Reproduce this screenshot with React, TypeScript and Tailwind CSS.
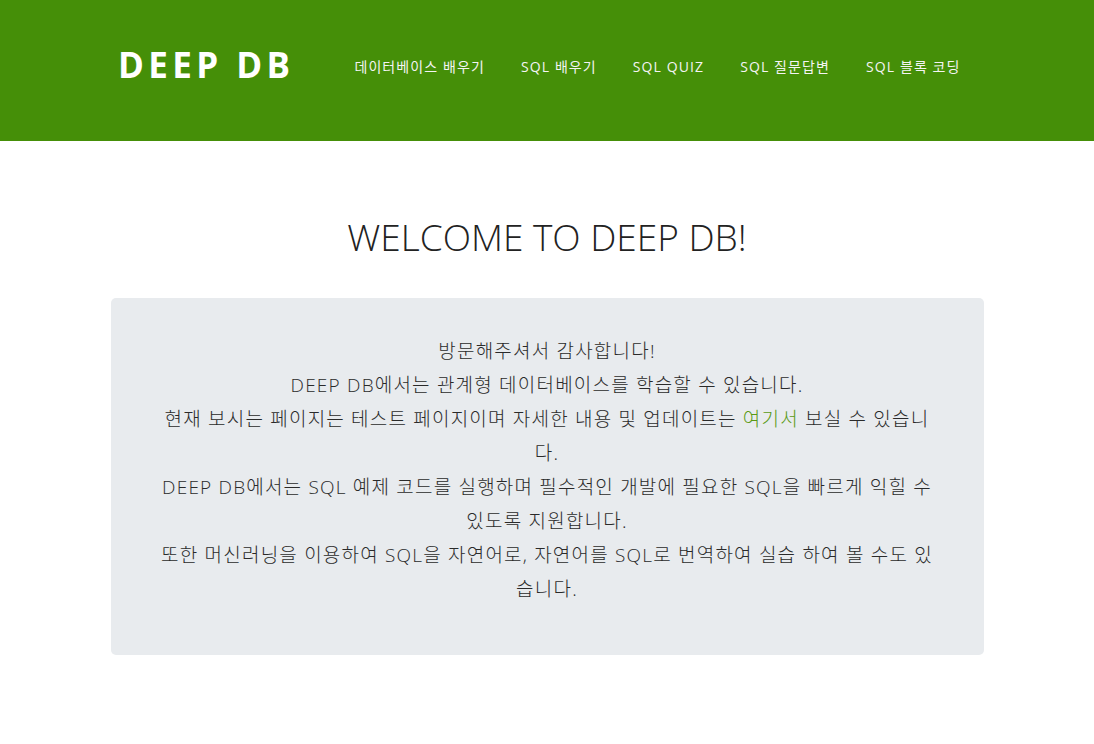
const navItems = ['데이터베이스 배우기', 'SQL 배우기', 'SQL QUIZ', 'SQL 질문답변', 'SQL 블록 코딩']

const kr = "font-['Open_Sans','Noto_Sans_CJK_KR',sans-serif]"

export default function App() {
  return (
    <div className={`min-h-screen bg-white ${kr}`}>
      <header className="h-[141px] bg-[#458f08] flex items-center">
        <div className="flex items-center pl-[118px]">
          <a href="#" className="text-white text-[35px] font-bold tracking-[4.4px] leading-none -mt-[12px]">
            DEEP DB
          </a>
          <nav className="flex items-center gap-[36px] ml-[60px] -mt-[8px]">
            {navItems.map((item) => (
              <a key={item} href="#" className="text-[14px] text-[#f4f4f4] tracking-[1.1px] leading-none">
                {item}
              </a>
            ))}
          </nav>
        </div>
      </header>

      <main className="flex flex-col items-center">
        <h1 className="mt-[77px] text-[37px] font-light text-[#222] leading-none">WELCOME TO DEEP DB!</h1>

        <section className="mt-[43px] w-[873px] h-[357px] bg-[#e8ebee] rounded-[5px] flex justify-center pt-[36px]">
          <div className="w-[772px] text-center text-[19px] font-light tracking-[1.2px] leading-[34px] text-[#2a2a2a]">
            <p>방문해주셔서 감사합니다!</p>
            <p>DEEP DB에서는 관계형 데이터베이스를 학습할 수 있습니다.</p>
            <p>
              현재 보시는 페이지는 테스트 페이지이며 자세한 내용 및 업데이트는 <a href="#" className="text-[#5a9a14]">여기서</a> 보실 수 있습니다.
            </p>
            <p>DEEP DB에서는 SQL 예제 코드를 실행하며 필수적인 개발에 필요한 SQL을 빠르게 익힐 수 있도록 지원합니다.</p>
            <p>또한 머신러닝을 이용하여 SQL을 자연어로, 자연어를 SQL로 번역하여 실습 하여 볼 수도 있습니다.</p>
          </div>
        </section>
      </main>
    </div>
  )
}
